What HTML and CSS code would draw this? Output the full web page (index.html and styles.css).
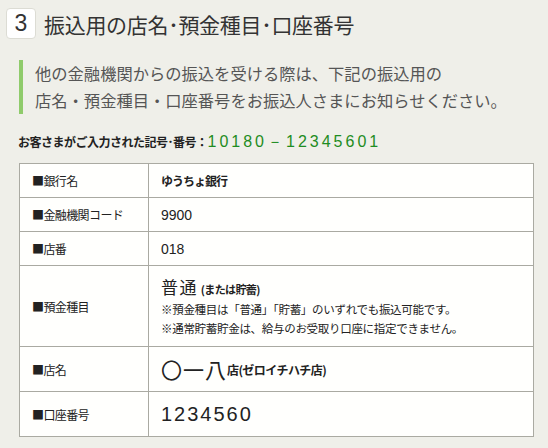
FILE: index.html
```html
<!DOCTYPE html>
<html lang="ja">
<head>
<meta charset="utf-8">
<link rel="stylesheet" href="styles.css">
</head>
<body>
<div class="page">
  <h2 class="step">
    <span class="step-num">3</span>
    <span class="step-title">振込用の店名･預金種目･口座番号</span>
  </h2>
  <p class="lead">他の金融機関からの振込を受ける際は、下記の振込用の<br>店名・預金種目・口座番号をお振込人さまにお知らせください。</p>
  <p class="entered">お客さまがご入力された記号･番号：<span class="num">10180－12345601</span></p>
  <table class="info">
    <tr class="r-s">
      <th>■銀行名</th>
      <td class="bold">ゆうちょ銀行</td>
    </tr>
    <tr class="r-s">
      <th>■金融機関コード</th>
      <td class="num-s">9900</td>
    </tr>
    <tr class="r-s">
      <th>■店番</th>
      <td class="num-s">018</td>
    </tr>
    <tr class="r-l">
      <th>■預金種目</th>
      <td>
        <div class="kind"><span class="big">普通</span> <span class="small-b">(または貯蓄)</span></div>
        <div class="note">※預金種目は「普通」「貯蓄」のいずれでも振込可能です。</div>
        <div class="note">※通常貯蓄貯金は、給与のお受取り口座に指定できません。</div>
      </td>
    </tr>
    <tr class="r-m">
      <th>■店名</th>
      <td><span class="branch">〇一八</span><span class="small-b">店(ゼロイチハチ店)</span></td>
    </tr>
    <tr class="r-m">
      <th>■口座番号</th>
      <td><span class="acct">1234560</span></td>
    </tr>
  </table>
</div>
</body>
</html>
```

FILE: styles.css
```css
html, body {
  margin: 0;
  padding: 0;
  background: #efefe9;
}
body {
  font-family: "Noto Sans CJK JP", "Noto Sans", sans-serif;
  color: #333;
}
.page {
  padding: 8px 0 0 0;
}
.step {
  display: flex;
  align-items: center;
  margin: 0;
  padding-left: 6px;
  font-weight: normal;
  height: 31px;
}
.step-num {
  display: flex;
  align-items: center;
  justify-content: center;
  width: 28px;
  height: 29px;
  background: #fff;
  border: 1px solid #dcdcd4;
  border-radius: 4px;
  font-family: "Liberation Sans", sans-serif;
  font-size: 23px;
  color: #333;
}
.step-title {
  margin-left: 8px;
  font-size: 21px;
  color: #333;
  letter-spacing: -0.3px;
}
.lead {
  margin: 21px 0 0 19px;
  padding: 0 0 0 12px;
  border-left: 4px solid #8fcb6b;
  font-size: 16.3px;
  line-height: 27px;
  color: #555;
}
.entered {
  margin: 19px 0 0 18px;
  font-size: 12px;
  letter-spacing: -0.5px;
  font-weight: bold;
  color: #222;
  line-height: 18px;
}
.entered .num {
  font-family: "Liberation Sans", sans-serif;
  font-weight: normal;
  font-size: 16px;
  color: #1e8c22;
  letter-spacing: 3px;
}
.info {
  margin: 12px 0 0 19px;
  width: 515px;
  border-collapse: collapse;
  background: #fffffd;
}
.info th, .info td {
  border: 1px solid #aaaaa2;
  padding: 0 0 0 12px;
  text-align: left;
  vertical-align: middle;
  font-size: 12px;
  color: #222;
}
.info th {
  width: 116px;
  font-weight: normal;
  letter-spacing: -0.6px;
}
.r-s { height: 34px; }
.r-l { height: 81px; }
.r-m { height: 45px; }
.bold {
  font-weight: bold;
  letter-spacing: -1px;
}
.num-s {
  font-family: "Liberation Sans", sans-serif;
}
.info td.num-s {
  font-size: 14px;
}
.kind {
  line-height: 22px;
  margin-top: 2px;
}
.big {
  font-size: 17px;
  letter-spacing: 1.5px;
}
.small-b {
  font-size: 11px;
  font-weight: bold;
  letter-spacing: -0.6px;
}
.note {
  font-size: 11.5px;
  line-height: 19px;
  letter-spacing: -0.3px;
}
.branch {
  font-size: 21px;
  font-weight: normal;
  letter-spacing: 1px;
  vertical-align: middle;
}
.r-m .small-b {
  font-size: 12px;
  vertical-align: middle;
}
.acct {
  font-family: "Liberation Sans", sans-serif;
  font-size: 20px;
  letter-spacing: 2px;
}
```
